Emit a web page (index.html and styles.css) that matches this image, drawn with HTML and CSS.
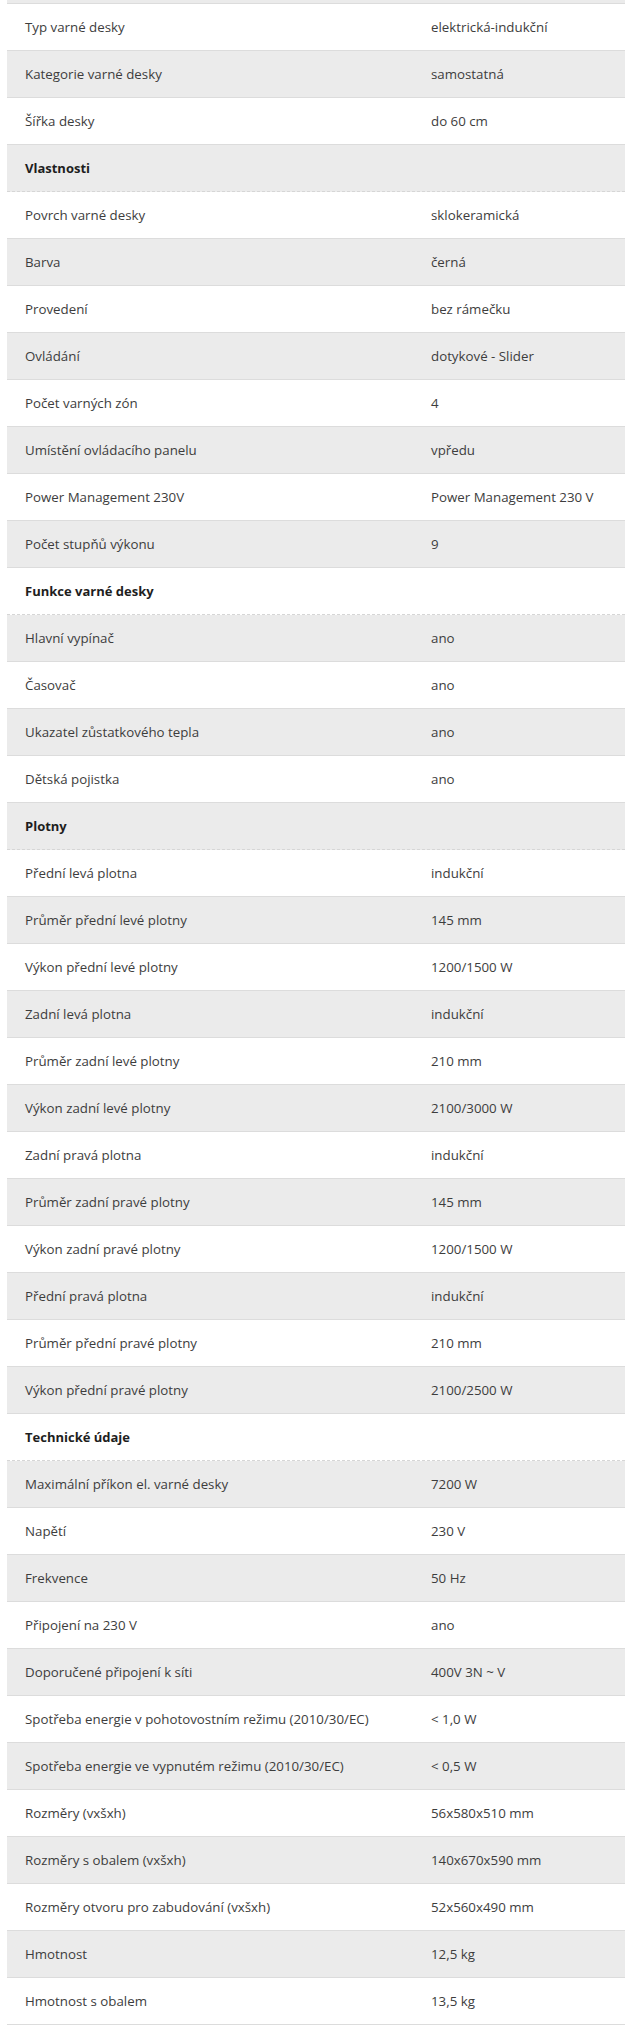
FILE: index.html
```html
<!DOCTYPE html>
<html lang="cs">
<head>
<meta charset="utf-8">
<title>Parametry</title>
<link rel="stylesheet" href="styles.css">
</head>
<body>
<div class="params">
  <div class="row gray top-strip"></div>
  <div class="row"><div class="k">Typ varné desky</div><div class="v">elektrická-indukční</div></div>
  <div class="row gray"><div class="k">Kategorie varné desky</div><div class="v">samostatná</div></div>
  <div class="row"><div class="k">Šířka desky</div><div class="v">do 60 cm</div></div>
  <div class="row gray head"><div class="k">Vlastnosti</div><div class="v"></div></div>
  <div class="row"><div class="k">Povrch varné desky</div><div class="v">sklokeramická</div></div>
  <div class="row gray"><div class="k">Barva</div><div class="v">černá</div></div>
  <div class="row"><div class="k">Provedení</div><div class="v">bez rámečku</div></div>
  <div class="row gray"><div class="k">Ovládání</div><div class="v">dotykové - Slider</div></div>
  <div class="row"><div class="k">Počet varných zón</div><div class="v">4</div></div>
  <div class="row gray"><div class="k">Umístění ovládacího panelu</div><div class="v">vpředu</div></div>
  <div class="row"><div class="k">Power Management 230V</div><div class="v">Power Management 230 V</div></div>
  <div class="row gray"><div class="k">Počet stupňů výkonu</div><div class="v">9</div></div>
  <div class="row head"><div class="k">Funkce varné desky</div><div class="v"></div></div>
  <div class="row gray"><div class="k">Hlavní vypínač</div><div class="v">ano</div></div>
  <div class="row"><div class="k">Časovač</div><div class="v">ano</div></div>
  <div class="row gray"><div class="k">Ukazatel zůstatkového tepla</div><div class="v">ano</div></div>
  <div class="row"><div class="k">Dětská pojistka</div><div class="v">ano</div></div>
  <div class="row gray head"><div class="k">Plotny</div><div class="v"></div></div>
  <div class="row"><div class="k">Přední levá plotna</div><div class="v">indukční</div></div>
  <div class="row gray"><div class="k">Průměr přední levé plotny</div><div class="v">145 mm</div></div>
  <div class="row"><div class="k">Výkon přední levé plotny</div><div class="v">1200/1500 W</div></div>
  <div class="row gray"><div class="k">Zadní levá plotna</div><div class="v">indukční</div></div>
  <div class="row"><div class="k">Průměr zadní levé plotny</div><div class="v">210 mm</div></div>
  <div class="row gray"><div class="k">Výkon zadní levé plotny</div><div class="v">2100/3000 W</div></div>
  <div class="row"><div class="k">Zadní pravá plotna</div><div class="v">indukční</div></div>
  <div class="row gray"><div class="k">Průměr zadní pravé plotny</div><div class="v">145 mm</div></div>
  <div class="row"><div class="k">Výkon zadní pravé plotny</div><div class="v">1200/1500 W</div></div>
  <div class="row gray"><div class="k">Přední pravá plotna</div><div class="v">indukční</div></div>
  <div class="row"><div class="k">Průměr přední pravé plotny</div><div class="v">210 mm</div></div>
  <div class="row gray"><div class="k">Výkon přední pravé plotny</div><div class="v">2100/2500 W</div></div>
  <div class="row head"><div class="k">Technické údaje</div><div class="v"></div></div>
  <div class="row gray"><div class="k">Maximální příkon el. varné desky</div><div class="v">7200 W</div></div>
  <div class="row"><div class="k">Napětí</div><div class="v">230 V</div></div>
  <div class="row gray"><div class="k">Frekvence</div><div class="v">50 Hz</div></div>
  <div class="row"><div class="k">Připojení na 230 V</div><div class="v">ano</div></div>
  <div class="row gray"><div class="k">Doporučené připojení k síti</div><div class="v">400V 3N ~ V</div></div>
  <div class="row"><div class="k">Spotřeba energie v pohotovostním režimu (2010/30/EC)</div><div class="v">&lt; 1,0 W</div></div>
  <div class="row gray"><div class="k">Spotřeba energie ve vypnutém režimu (2010/30/EC)</div><div class="v">&lt; 0,5 W</div></div>
  <div class="row"><div class="k">Rozměry (vxšxh)</div><div class="v">56x580x510 mm</div></div>
  <div class="row gray"><div class="k">Rozměry s obalem (vxšxh)</div><div class="v">140x670x590 mm</div></div>
  <div class="row"><div class="k">Rozměry otvoru pro zabudování (vxšxh)</div><div class="v">52x560x490 mm</div></div>
  <div class="row gray"><div class="k">Hmotnost</div><div class="v">12,5 kg</div></div>
  <div class="row"><div class="k">Hmotnost s obalem</div><div class="v">13,5 kg</div></div>
</div>
</body>
</html>
```

FILE: styles.css
```css
html, body {
  margin: 0;
  padding: 0;
  background: #ffffff;
}

body {
  font-family: "Open Sans", "Liberation Sans", sans-serif;
  font-size: 13.3px;
  color: #3d3d3d;
}

.params {
  width: 618px;
  margin-left: 7px;
}

.row {
  display: grid;
  grid-template-columns: 406px 212px;
  height: 46px;
  align-items: center;
  border-bottom: 1px solid #dcdcdc;
  background: #ffffff;
}

.row.gray {
  background: #ebebeb;
}

.row.top-strip {
  height: 3px;
}

.row.head {
  border-bottom: 1px dashed #d6d6d6;
}

.k, .v {
  padding: 0 18px;
  white-space: nowrap;
  line-height: 18px;
}

.head .k {
  font-size: 13px;
  font-weight: 700;
  color: #1e1e1e;
}
```
